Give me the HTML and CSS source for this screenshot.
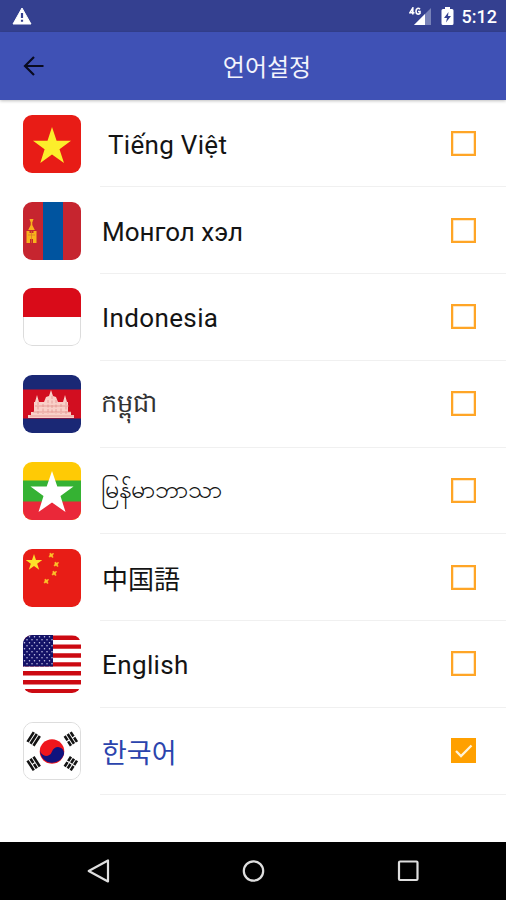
FILE: index.html
```html
<!DOCTYPE html>
<html lang="ko">
<head>
<meta charset="utf-8">
<title>언어설정</title>
<link rel="stylesheet" href="styles.css">
</head>
<body>
<div class="screen">
  <div class="status">
    <svg class="warn" width="20" height="18" viewBox="0 0 20 18"><path d="M10 1 19 17H1Z" fill="#fff" stroke="#fff" stroke-linejoin="round"/><path d="M10 6v5M10 12.700v2" stroke="#344090" stroke-width="2.200"/></svg>
    <svg class="signal" width="23" height="19" viewBox="0 0 23 19"><path d="M22 1v17H5Z" fill="#7882b8"/><path d="M16 7v11H5Z" fill="#fff"/><path d="M3.800 7.500V1L1 5.700h4.500M11 2.200C9.500.6 7 1 7 4.300s2.500 3.300 4 2V4.500H9" fill="none" stroke="#fff" stroke-width="1.600"/></svg>
    <svg class="battery" width="13" height="20" viewBox="0 0 13 20"><path d="M4 1h5v2h2q1.500 0 1.500 1.500v13q0 1.500-1.500 1.500H2Q.5 19 .5 17.500v-13Q.5 3 2 3h2Z" fill="#fff"/><path d="M7.500 6 3 12h3l-1 4.500 5-6.500H7Z" fill="#344090"/></svg>
    <span class="clock">5:12</span>
  </div>
  <header class="bar">
    <svg class="back" width="22" height="22" viewBox="0 0 22 22"><path d="M20.500 11H2.500M11 2 2 11l9 9" fill="none" stroke="#090b20" stroke-width="2.200"/></svg>
    <h1 class="title">언어설정</h1>
  </header>
  <ul class="list">
    <li class="row">
      <svg class="flag" viewBox="0 0 58 58"><rect width="58" height="58" fill="#e81c16"/><path d="M29 12 33.600 25.800 48 25.800 36.500 34.200 41 48 29 39.500 17.300 48 21.600 34.200 10 25.800 24.500 25.800Z" fill="#fcee2b"/></svg>
      <div class="item"><span class="name vi">Tiếng Việt</span><span class="box"></span></div>
    </li>
    <li class="row">
      <svg class="flag" viewBox="0 0 58 58"><rect width="58" height="58" fill="#c6252f"/><path d="M20 0h20v58H20Z" fill="#00549f"/><path d="M6.500 17h4l-1 3h-2ZM7.700 20h1.600v3l2.500 5H5.200l2.500-5ZM3.500 29h3v2h4v-2h3v12h-3.500v-4h-3v4H3.500Z" fill="#f8b21c"/><path d="M5 33h7M8.500 29v12" stroke="#d8702a" stroke-width=".7"/></svg>
      <div class="item"><span class="name mn">Монгол хэл</span><span class="box"></span></div>
    </li>
    <li class="row">
      <svg class="flag" viewBox="0 0 58 58"><rect x=".5" y=".5" width="57" height="57" rx="8.500" fill="#fff" stroke="#dcdcdc"/><path d="M0 0h58v29H0Z" fill="#d90b19"/></svg>
      <div class="item"><span class="name id">Indonesia</span><span class="box"></span></div>
    </li>
    <li class="row">
      <svg class="flag" viewBox="0 0 58 58"><rect width="58" height="58" fill="#1a2875"/><path d="M0 14.500h58v29H0Z" fill="#d20e20"/><path d="M5 43v-3h3v-3h3V27h1l2-7 2 7h5l2-5 3-1 2-6 2 6 3 1 2 5h5l2-7 2 7h1v10h3v3h3v3Z" fill="#f9d0c8"/><path d="M12 31h34M10 37h38M7 41h44" stroke="#df8a84" stroke-width=".7"/><path d="M15 27v12M20 29v10M25 25v14M29 21v18M33 25v14M38 29v10M43 27v12" stroke="#e09490" stroke-width=".8" stroke-dasharray="3 1.500"/></svg>
      <div class="item"><span class="name km" lang="km">កម្ពុជា</span><span class="box"></span></div>
    </li>
    <li class="row">
      <svg class="flag" viewBox="0 0 58 58"><rect width="58" height="58" fill="#ffca05"/><path d="M0 18.500h58V40H0Z" fill="#35b233"/><path d="M0 39.500h58V58H0Z" fill="#ea2839"/><path d="m29 9 5.300 15.500H50.500L37.500 34l5 16L29 40.500 15.500 50l5-16L7.500 24.500h16.200Z" fill="#fff"/></svg>
      <div class="item"><span class="name my" lang="my">မြန်မာဘာသာ</span><span class="box"></span></div>
    </li>
    <li class="row">
      <svg class="flag" viewBox="0 0 58 58"><rect width="58" height="58" fill="#e81d16"/><path d="m11 5 2 6h6.300l-5.100 3.700 2 6-5.200-3.800-5.200 3.800 2-6L2.700 11H9Z" fill="#fce12a"/><g fill="#fbc32a" stroke="#fbc32a" stroke-width=".7"><path d="m27 4 1.500 1 2-.5-1 2 .5 2-2-1-2 .5 1-2Z"/><path d="m32 13 1.500 1 2-.5-1 2 .5 2-2-1-2 .5 1-2Z"/><path d="m30 22 1.500 1 2-.5-1 2 .5 2-2-1-2 .5 1-2Z"/><path d="m22 30 1.500 1 2-.5-1 2 .5 2-2-1-2 .5 1-2Z"/></g></svg>
      <div class="item"><span class="name zh" lang="ja">中国語</span><span class="box"></span></div>
    </li>
    <li class="row">
      <svg class="flag" viewBox="0 0 58 58"><defs><pattern id="stars" width="5" height="6" patternUnits="userSpaceOnUse"><circle cx="1.500" cy="1.800" r=".75" fill="#c9c9e8"/><circle cx="4" cy="4.800" r=".75" fill="#c9c9e8"/></pattern></defs><rect width="58" height="58" fill="#fff"/><path d="M0 2.700h58M0 11.600h58M0 20.500h58M0 29.400h58M0 38.300h58M0 47.200h58M0 56.100h58" stroke="#cc0a12" stroke-width="4.400"/><path d="M0 0h30v31.500H0Z" fill="#131267"/><path d="M0 0h30v31.500H0Z" fill="url(#stars)"/></svg>
      <div class="item"><span class="name en">English</span><span class="box"></span></div>
    </li>
    <li class="row">
      <svg class="flag framed" viewBox="0 0 58 58"><rect width="58" height="58" fill="#fff"/><circle cx="29" cy="29.500" r="12.700" fill="#ef161d"/><path d="M16.600 27A6.350 6.350 0 0 0 29 29.500 6.350 6.350 0 0 1 41.400 32 12.700 12.700 0 0 1 16.600 27Z" fill="#10137e"/><g stroke="#141414" stroke-width="2.700"><path transform="translate(10 16.500) rotate(-57)" d="M-6-3.700H6M-6 0H6M-6 3.700H6"/><path transform="translate(48.500 16.500) rotate(57)" d="M-6-3.700h5.400M.6-3.700H6M-6 0H6M-6 3.700h5.400M.6 3.700H6"/><path transform="translate(10 42) rotate(57)" d="M-6-3.700H6M-6 0h5.400M.6 0H6M-6 3.700H6"/><path transform="translate(48.500 42) rotate(-57)" d="M-6-3.700h5.400M.6-3.700H6M-6 0h5.400M.6 0H6M-6 3.700h5.400M.6 3.700H6"/></g></svg>
      <div class="item"><span class="name ko">한국어</span><span class="box checked"><svg width="25" height="25" viewBox="0 0 25 25"><path d="m5 13 5 5L20.500 7.500" fill="none" stroke="#fff3d8" stroke-width="2.300"/></svg></span></div>
    </li>
  </ul>
  <nav class="nav">
    <svg width="24" height="24" viewBox="0 0 24 24"><path d="M21 1.500v21L1.700 12Z"/></svg>
    <svg width="24" height="24" viewBox="0 0 24 24"><circle cx="11.500" cy="12" r="9.700"/></svg>
    <svg width="24" height="24" viewBox="0 0 24 24"><rect x="3" y="2.500" width="18.500" height="18.500" rx="1"/></svg>
  </nav>
</div>
</body>
</html>
```
FILE: styles.css
```css
* { box-sizing: border-box; }
body { margin: 0; background: #fff; font-family: Roboto, "Noto Sans CJK KR", "Noto Sans", sans-serif; }
.screen { display: flex; flex-direction: column; height: 900px; overflow: hidden; }
.status { display: flex; align-items: center; height: 32px; padding: 0 9px 0 12px; background: #344090; }
.warn { margin-right: auto; }
.signal { margin-right: 9px; }
.battery { margin-right: 8px; }
.clock { color: #fff; font-size: 18px; font-weight: 500; line-height: 32px; padding-top: 1px; }
.bar { display: grid; grid-template-columns: 86px 1fr 58px; align-items: center; height: 68px; background: #3f51b5; box-shadow: 0 1px 3px rgba(0,0,0,.25); }
.back { margin-left: 23px; }
.title { margin: 0; padding-top: 4px; color: #f3f4fc; font-size: 24px; font-weight: 400; line-height: 36px; text-align: center; }
.list { flex: 1; margin: 0; padding: .5px 0 0; list-style: none; }
.row { display: flex; align-items: center; height: 86.750px; padding-left: 22.500px; }
.flag { flex: none; width: 58px; height: 58px; border-radius: 9px; }
.framed { border: 1.500px solid #ddd; border-radius: 10px; }
.item { display: flex; flex: 1; align-items: center; justify-content: space-between; height: 100%; margin-left: 19.500px; padding-right: 30px; border-bottom: 1.500px solid #f0f0f0; }
.name { padding: 3px 0 0 2px; color: #141414; font-size: 26px; line-height: 40px; white-space: nowrap; }
.vi { padding-left: 8px; letter-spacing: .3px; }
.id, .en { letter-spacing: .38px; }
.km { padding: 0 0 1px 1px; color: #333; font-size: 25.500px; font-weight: 300; }
.my { padding: 0 0 1px 1px; font-size: 25px; }
.zh { padding-top: 1px; font-family: "Noto Sans CJK JP", sans-serif; }
.ko { padding-top: 6px; color: #2b44ad; font-size: 27px; }
.box { flex: none; width: 25px; height: 25px; border: 2px solid #ffa526; box-shadow: inset 0 0 0 .5px #ffd18c; }
.checked { border: 0; background: #ffa000; box-shadow: none; }
.checked svg { display: block; }
.nav { display: flex; align-items: center; justify-content: space-between; height: 58.500px; padding: 0 86px 0 87px; background: #000; }
.nav svg { fill: none; stroke: #dedede; stroke-width: 2.200; stroke-linejoin: round; }
```
